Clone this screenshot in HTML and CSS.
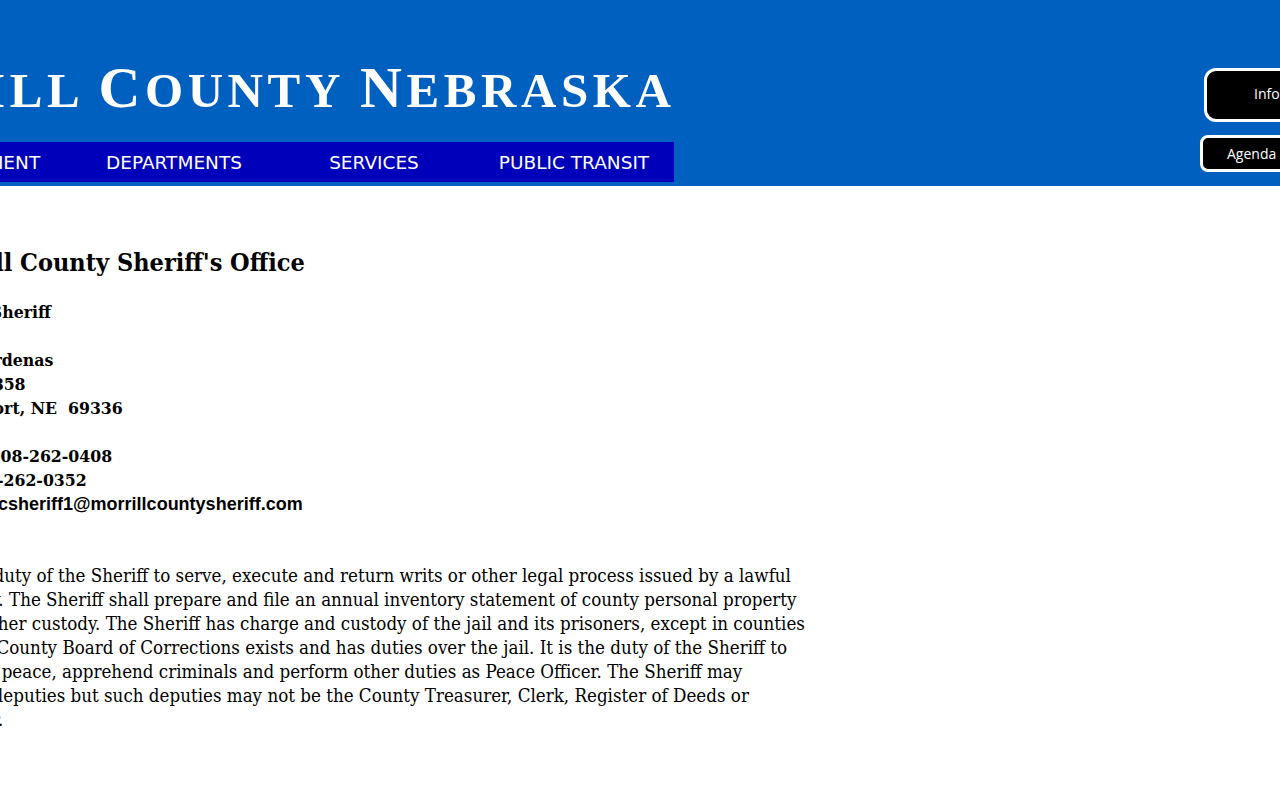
FILE: index.html
```html
<!DOCTYPE html>
<html lang="en">
<head>
<meta charset="utf-8">
<title>Morrill County Sheriff's Office</title>
<link rel="stylesheet" href="styles.css">
</head>
<body>
<header class="site-header">
  <div class="brand">
    <h1 class="site-title"><span class="initial">M</span>orrill <span class="initial">C</span>ounty <span class="initial">N</span>ebraska</h1>
    <nav class="menu">
      <a class="menu-item" href="#">HOME</a>
      <a class="menu-item" href="#">GOVERNMENT</a>
      <a class="menu-item" href="#">DEPARTMENTS</a>
      <a class="menu-item" href="#">SERVICES</a>
      <a class="menu-item" href="#">PUBLIC TRANSIT</a>
    </nav>
  </div>
  <div class="quick-links">
    <a class="btn btn-info" href="#">Information</a>
    <a class="btn btn-agenda" href="#">Agenda Center</a>
  </div>
</header>
<main class="content">
  <h2 class="page-title">Morrill County Sheriff's Office</h2>
  <div class="contact">
    <p class="line">County Sheriff</p>
    <p class="line blank">&nbsp;</p>
    <p class="line">Todd Cardenas</p>
    <p class="line">PO Box 858</p>
    <p class="line">Bridgeport, NE&nbsp; 69336</p>
    <p class="line blank">&nbsp;</p>
    <p class="line">Phone: 308-262-0408</p>
    <p class="line">Fax: 308-262-0352</p>
    <p class="line email">Email: mcsheriff1@morrillcountysheriff.com</p>
  </div>
  <p class="duties">It is the duty of the Sheriff to serve, execute and return writs or other legal process issued by a lawful<br>authority. The Sheriff shall prepare and file an annual inventory statement of county personal property<br>in his or her custody. The Sheriff has charge and custody of the jail and its prisoners, except in counties<br>where a County Board of Corrections exists and has duties over the jail. It is the duty of the Sheriff to<br>keep the peace, apprehend criminals and perform other duties as Peace Officer. The Sheriff may<br>appoint deputies but such deputies may not be the County Treasurer, Clerk, Register of Deeds or<br>Surveyor.</p>
</main>
</body>
</html>
```

FILE: styles.css
```css
html, body {
  margin: 0;
  padding: 0;
  background: #ffffff;
  overflow: hidden;
}

.site-header {
  background: #0060c0;
  height: 186px;
  display: flex;
  justify-content: space-between;
  overflow: hidden;
}

.brand {
  margin-left: -326px;
  display: flex;
  flex-direction: column;
}

.site-title {
  margin: 0 0 0 130px;
  padding-top: 55px;
  height: 142px;
  box-sizing: border-box;
  font-family: "Liberation Serif", serif;
  font-weight: bold;
  font-size: 49px;
  line-height: 66px;
  letter-spacing: 4.6px;
  text-transform: uppercase;
  color: #ffffff;
  white-space: nowrap;
}

.initial {
  font-size: 58px;
}

.menu {
  display: flex;
  background: #0000bb;
  height: 40px;
  width: 1000px;
}

.menu-item {
  width: 200px;
  display: flex;
  align-items: center;
  justify-content: center;
  color: #ffffff;
  text-decoration: none;
  font-family: "DejaVu Sans", sans-serif;
  font-size: 18.5px;
}

.quick-links {
  display: flex;
  flex-direction: column;
  align-items: flex-start;
  margin-right: -120px;
  padding-top: 68px;
}

.btn {
  background: #000000;
  color: #ffffff;
  text-decoration: none;
  font-family: "Open Sans", sans-serif;
  font-size: 14px;
  white-space: nowrap;
  border: 3px solid #ffffff;
  box-sizing: border-box;
  display: flex;
  align-items: center;
}

.btn-info {
  margin-left: 4px;
  width: 190px;
  height: 54px;
  border-radius: 12px;
  padding-left: 47px;
  padding-bottom: 4px;
}

.btn-agenda {
  margin-top: 13px;
  width: 200px;
  height: 37px;
  border-radius: 8px;
  padding-left: 24px;
}

.content {
  margin-left: -77px;
  padding-top: 60px;
  font-family: "DejaVu Serif Condensed", "DejaVu Serif", serif;
  color: #000000;
}

.page-title {
  margin: 0 0 20px 0;
  font-size: 25px;
  line-height: 34px;
  font-weight: bold;
}

.line {
  margin: 0;
  font-weight: bold;
  font-size: 17.5px;
  line-height: 24px;
  white-space: nowrap;
}

.email {
  font-family: "Liberation Sans", sans-serif;
  font-size: 18px;
}

.duties {
  margin: 48px 0 0 0;
  font-size: 18.6px;
  line-height: 24px;
  white-space: nowrap;
}
```
